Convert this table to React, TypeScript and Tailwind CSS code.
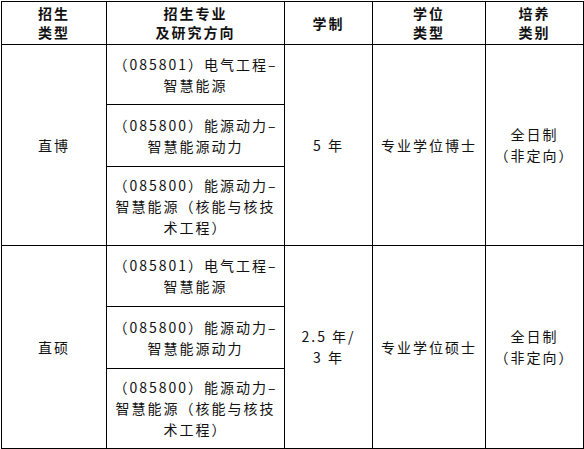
const font = { fontFamily: '"Noto Sans CJK SC", "Noto Sans", sans-serif' };

function Cell({
    lines,
    className = '',
    bold = false,
}: {
    lines: string[];
    className?: string;
    bold?: boolean;
}) {
    return (
        <div
            className={`flex flex-col items-center justify-center bg-white text-center text-[14px] tracking-[2px] text-[#111] ${
                bold ? 'font-bold leading-[19px]' : 'leading-[21px]'
            } ${className}`}
        >
            {lines.map((l, i) => (
                <span key={i} className="whitespace-nowrap">
                    {l}
                </span>
            ))}
        </div>
    );
}

const majors: string[][] = [
    ['（085801）电气工程–', '智慧能源'],
    ['（085800）能源动力–', '智慧能源动力'],
    ['（085800）能源动力–', '智慧能源（核能与核技', '术工程）'],
];

export default function App() {
    return (
        <div className="h-[449px] w-[584px] bg-white" style={font}>
            <div className="ml-px mt-px grid w-[583px] grid-cols-[104px_177px_87px_112px_97px] grid-rows-[42px_59px_61px_78px_60px_61px_79px] gap-px bg-black p-px">
                {/* header */}
                <Cell bold lines={['招生', '类型']} />
                <Cell bold lines={['招生专业', '及研究方向']} />
                <Cell bold lines={['学制']} />
                <Cell bold lines={['学位', '类型']} />
                <Cell bold lines={['培养', '类别']} />

                {/* 直博 */}
                <Cell lines={['直博']} className="row-span-3" />
                <Cell lines={majors[0]} />
                <Cell lines={['5 年']} className="row-span-3" />
                <Cell lines={['专业学位博士']} className="row-span-3" />
                <Cell lines={['全日制', '（非定向）']} className="row-span-3" />
                <Cell lines={majors[1]} />
                <Cell lines={majors[2]} />

                {/* 直硕 */}
                <Cell lines={['直硕']} className="row-span-3" />
                <Cell lines={majors[0]} />
                <Cell lines={['2.5 年/', '3 年']} className="row-span-3" />
                <Cell lines={['专业学位硕士']} className="row-span-3" />
                <Cell lines={['全日制', '（非定向）']} className="row-span-3" />
                <Cell lines={majors[1]} />
                <Cell lines={majors[2]} />
            </div>
        </div>
    );
}
